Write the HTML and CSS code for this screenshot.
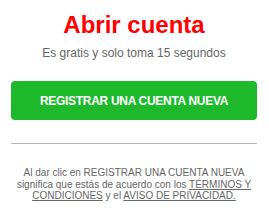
FILE: index.html
```html
<!DOCTYPE html>
<html lang="es">
<head>
<meta charset="utf-8">
<title>Abrir cuenta</title>
<link rel="stylesheet" href="styles.css">
</head>
<body>
<main class="signup">
  <h1 class="signup__title">Abrir cuenta</h1>
  <p class="signup__subtitle">Es gratis y solo toma 15 segundos</p>
  <a class="signup__button" href="#">REGISTRAR UNA CUENTA NUEVA</a>
  <hr class="signup__rule">
  <p class="signup__legal">Al dar clic en REGISTRAR UNA CUENTA NUEVA significa que estás de acuerdo con los <a href="#" class="signup__link">TÉRMINOS Y CONDICIONES</a> y el <a href="#" class="signup__link">AVISO DE PRIVACIDAD.</a></p>
</main>
</body>
</html>
```
FILE: styles.css
```css
html, body {
  margin: 0;
  padding: 0;
  background: #ffffff;
}

body {
  font-family: "Liberation Sans", Arial, sans-serif;
}

.signup {
  display: flex;
  flex-direction: column;
  align-items: stretch;
  padding: 11px 12px 0 11px;
  text-align: center;
}

.signup__title {
  margin: 0;
  font-size: 24px;
  font-weight: bold;
  line-height: 27px;
  color: #ff0000;
}

.signup__subtitle {
  margin: 8px 0 0;
  font-size: 12px;
  line-height: 14px;
  color: #666666;
}

.signup__button {
  display: flex;
  align-items: center;
  justify-content: center;
  margin-top: 21px;
  height: 39px;
  border-radius: 4px;
  background: #1db92a;
  color: #ffffff;
  font-size: 12px;
  font-weight: bold;
  letter-spacing: -0.3px;
  text-decoration: none;
}

.signup__rule {
  margin: 23px 0 0;
  border: 0;
  height: 1px;
  background: #b8b8b8;
}

.signup__legal {
  margin: 23px 0 0;
  font-size: 10px;
  line-height: 11.5px;
  color: #666666;
}

.signup__link {
  color: #666666;
  text-decoration: underline;
}
```
